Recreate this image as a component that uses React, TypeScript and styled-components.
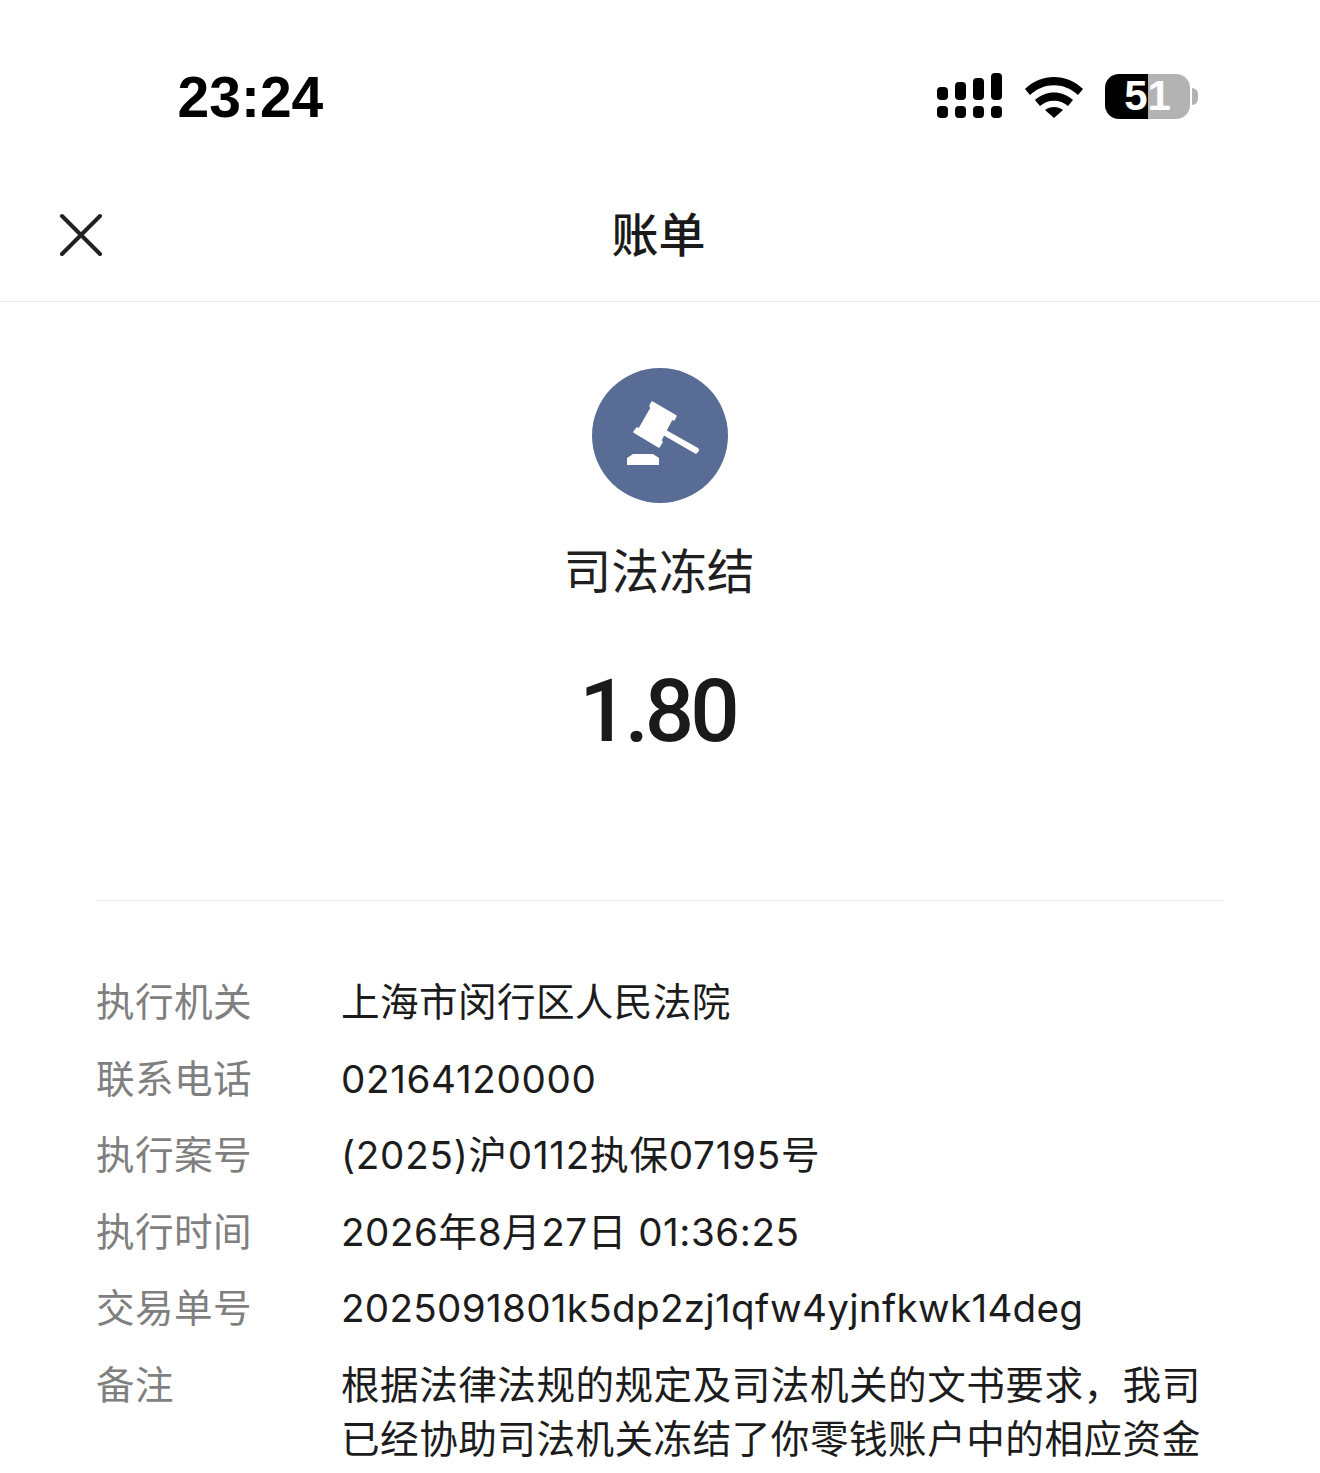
import styled, { createGlobalStyle } from "styled-components";

const GlobalStyle = createGlobalStyle`
  html, body {
    margin: 0;
    padding: 0;
    background: #fff;
  }
  body {
    font-family: Inter, "Noto Sans CJK SC", sans-serif;
  }
`;

const Page = styled.div`
  width: 1320px;
  height: 1473px;
  overflow: hidden;
  background: #fff;
  display: flex;
  flex-direction: column;
`;

const StatusBar = styled.div`
  height: 190px;
  padding: 4px 121px 0 177.5px;
  box-sizing: border-box;
  display: flex;
  align-items: center;
  justify-content: space-between;
`;

const Time = styled.div`
  font-family: "Liberation Sans", sans-serif;
  font-size: 57px;
  font-weight: 700;
  color: #000;
`;

const StatusIcons = styled.div`
  display: flex;
  align-items: center;
  gap: 22px;
  margin-top: -2px;
`;

const Battery = styled.div`
  width: 94px;
  height: 46px;
  display: flex;
  align-items: center;
`;

const BatteryBody = styled.div`
  width: 85px;
  height: 45px;
  border-radius: 14px;
  background: linear-gradient(to right, #000 0 43px, #b3b3b3 43px);
  color: #fff;
  font-family: "Liberation Sans", sans-serif;
  font-size: 42px;
  font-weight: 700;
  display: flex;
  align-items: center;
  justify-content: center;
`;

const BatteryCap = styled.div`
  width: 6px;
  height: 17px;
  margin-left: 2px;
  border-radius: 0 8px 8px 0;
  background: #b3b3b3;
`;

const NavBar = styled.div`
  height: 112px;
  box-sizing: border-box;
  border-bottom: 1px solid #e8e8e8;
  display: flex;
  align-items: center;
  justify-content: center;
  position: relative;
`;

const CloseButton = styled.div`
  position: absolute;
  left: 58px;
  top: 22px;
  width: 46px;
  height: 46px;
`;

const NavTitle = styled.div`
  font-size: 47px;
  font-weight: 500;
  color: #1a1a1a;
  margin: 0 3px 28px 0;
`;

const Summary = styled.div`
  display: flex;
  flex-direction: column;
  align-items: center;
  padding-top: 66px;
  height: 598px;
  box-sizing: border-box;
`;

const IconCircle = styled.div`
  width: 136px;
  height: 135px;
  border-radius: 50%;
  background: #596c96;
  display: flex;
  align-items: center;
  justify-content: center;
`;

const Title = styled.div`
  font-size: 47.8px;
  line-height: 66px;
  margin: 36px 2px 0 0;
  color: #1f1f1f;
`;

const Amount = styled.div`
  font-family: Roboto, sans-serif;
  font-size: 87px;
  line-height: 96px;
  font-weight: 500;
  letter-spacing: -4px;
  margin: 58px 5px 0 0;
  color: #1a1a1a;
`;

const Divider = styled.div`
  margin: 0 96px;
  height: 1px;
  background: #e8e8e8;
`;

const Details = styled.div`
  padding: 74px 96px 0 96px;
  display: flex;
  flex-direction: column;
  gap: 22.5px;
`;

const Row = styled.div`
  display: flex;
  font-size: 38.6px;
  line-height: 54px;
`;

const Label = styled.div`
  width: 245px;
  flex: none;
  letter-spacing: 0.4px;
  color: #7f7f7f;
`;

const Value = styled.div<{ $spacing: number }>`
  flex: 1;
  letter-spacing: ${(props) => props.$spacing}px;
  color: #1c1c1c;
`;

const rows = [
  { label: "执行机关", value: "上海市闵行区人民法院", spacing: 0.4 },
  { label: "联系电话", value: "02164120000", spacing: 0.65 },
  { label: "执行案号", value: "(2025)沪0112执保07195号", spacing: 0.75 },
  { label: "执行时间", value: "2026年8月27日 01:36:25", spacing: 0.55 },
  { label: "交易单号", value: "2025091801k5dp2zj1qfw4yjnfkwk14deg", spacing: 0.31 },
  {
    label: "备注",
    value:
      "根据法律法规的规定及司法机关的文书要求，我司已经协助司法机关冻结了你零钱账户中的相应资金",
    spacing: 0.5,
  },
];

function SignalIcon() {
  return (
    <svg width="66" height="46" viewBox="0 0 66 46" fill="#000">
      <rect x="0" y="14" width="11" height="13" rx="4" />
      <rect x="18" y="9" width="11" height="18" rx="4" />
      <rect x="36" y="5" width="11" height="22" rx="4" />
      <rect x="54" y="0" width="11" height="27" rx="4" />
      <rect x="0" y="33" width="11" height="12" rx="4" />
      <rect x="18" y="33" width="11" height="12" rx="4" />
      <rect x="36" y="33" width="11" height="12" rx="4" />
      <rect x="54" y="33" width="11" height="12" rx="4" />
    </svg>
  );
}

function WifiIcon() {
  return (
    <svg width="58" height="44" viewBox="0 0 58 44" fill="#000">
      <path d="M0 15C16-1 42-1 58 15l-5 6C39 8 19 8 5 21Z" />
      <path d="M10 26c11-10 27-10 38 0l-5 6c-8-7-20-7-28 0Z" />
      <path d="M20 36c5-4 13-4 18 0l-9 8Z" />
    </svg>
  );
}

function CloseIcon() {
  return (
    <svg width="46" height="46" viewBox="0 0 46 46" fill="none" stroke="#222" strokeWidth="4" strokeLinecap="round">
      <path d="M4 4l38 38M42 4L4 42" />
    </svg>
  );
}

function GavelIcon() {
  return (
    <svg width="136" height="136" viewBox="0 0 136 136" fill="#fff">
      <path
        d="M60 34l24 14-2 4-2-1-11 21 1 2-3 5-25-15 3-4 2 1 12-21-1-2Z"
        stroke="#fff"
        strokeWidth="1.5"
        strokeLinejoin="round"
      />
      <path d="M74 62l32 18q2 2 0 4l-2 2-33-19Z" />
      <path d="M35 97v-7l6-4h20l6 4v7Z" />
    </svg>
  );
}

export default function App() {
  return (
    <>
      <GlobalStyle />
      <Page>
        <StatusBar>
          <Time>23:24</Time>
          <StatusIcons>
            <SignalIcon />
            <WifiIcon />
            <Battery>
              <BatteryBody>51</BatteryBody>
              <BatteryCap />
            </Battery>
          </StatusIcons>
        </StatusBar>
        <NavBar>
          <CloseButton>
            <CloseIcon />
          </CloseButton>
          <NavTitle>账单</NavTitle>
        </NavBar>
        <Summary>
          <IconCircle>
            <GavelIcon />
          </IconCircle>
          <Title>司法冻结</Title>
          <Amount>1.80</Amount>
        </Summary>
        <Divider />
        <Details>
          {rows.map((row) => (
            <Row key={row.label}>
              <Label>{row.label}</Label>
              <Value $spacing={row.spacing}>{row.value}</Value>
            </Row>
          ))}
        </Details>
      </Page>
    </>
  );
}
